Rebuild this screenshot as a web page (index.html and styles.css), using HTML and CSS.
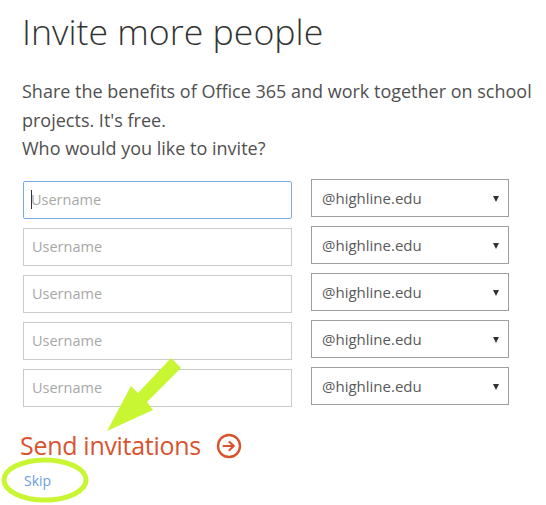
FILE: index.html
```html
<!DOCTYPE html>
<html>
<head>
<meta charset="utf-8">
<link rel="stylesheet" href="styles.css">
</head>
<body>
<main class="page">
  <h1 class="title">Invite more people</h1>
  <p class="intro">Share the benefits of Office 365 and work together on school projects. It's free.<br>Who would you like to invite?</p>
  <div class="rows">
    <div class="row"><div class="user focused"><span class="cursor"></span>Username</div><div class="domain">@highline.edu<span class="caret"></span></div></div>
    <div class="row"><div class="user">Username</div><div class="domain">@highline.edu<span class="caret"></span></div></div>
    <div class="row"><div class="user">Username</div><div class="domain">@highline.edu<span class="caret"></span></div></div>
    <div class="row"><div class="user">Username</div><div class="domain">@highline.edu<span class="caret"></span></div></div>
    <div class="row"><div class="user">Username</div><div class="domain">@highline.edu<span class="caret"></span></div></div>
  </div>
  <div class="send">Send invitations
    <svg class="send-icon" width="26" height="26" viewBox="0 0 26 26"><circle cx="13" cy="13" r="11" fill="none" stroke="#d9532f" stroke-width="2.4"/><path d="M7.5 13H17.5M13.5 9L17.8 13L13.5 17" fill="none" stroke="#d9532f" stroke-width="2.2" stroke-linecap="round" stroke-linejoin="round"/></svg>
  </div>
  <a class="skip">Skip</a>
  <svg class="annot" width="546" height="505" viewBox="0 0 546 505">
    <polygon points="171,358 181,368 147,402 153,410 107,431 131,386 138,393" fill="#c8f632"/>
    <ellipse cx="45" cy="480" rx="41" ry="20" fill="none" stroke="#c8f632" stroke-width="5"/>
  </svg>
</main>
</body>
</html>
```

FILE: styles.css
```css
html, body {
  margin: 0;
  padding: 0;
  background: #ffffff;
}
.page {
  position: relative;
  width: 546px;
  height: 505px;
  overflow: hidden;
  padding-left: 22px;
  box-sizing: border-box;
  font-family: "Open Sans", "Noto Sans", sans-serif;
}
.title {
  margin: 0;
  padding-top: 9px;
  font-size: 35.7px;
  font-weight: 300;
  line-height: 44px;
  color: #333333;
  letter-spacing: 0;
}
.intro {
  margin: 24px 0 0 0;
  font-size: 18px;
  line-height: 28.5px;
  color: #505050;
  font-weight: 400;
  letter-spacing: 0;
}
.rows {
  margin-top: 16px;
  display: flex;
  flex-direction: column;
  gap: 7px;
}
.row {
  display: flex;
  align-items: flex-start;
  gap: 19px;
}
.user {
  margin-top: 2px;
  margin-left: 1px;
  width: 269px;
  height: 38px;
  box-sizing: border-box;
  border: 1px solid #c9cccc;
  padding-left: 8px;
  display: flex;
  align-items: center;
  font-size: 14.5px;
  color: #a8a8a8;
}
.user.focused {
  border-color: #7ba8ea;
  border-width: 1.5px;
  border-radius: 2px;
  padding-left: 7px;
}
.cursor {
  display: inline-block;
  width: 1px;
  height: 19px;
  background: #333;
  margin-right: -1px;
}
.domain {
  position: relative;
  width: 198px;
  height: 38px;
  box-sizing: border-box;
  border: 1px solid #9e9e9e;
  padding-left: 10px;
  display: flex;
  align-items: center;
  font-size: 15px;
  color: #5a5a5a;
}
.caret {
  position: absolute;
  right: 9px;
  top: 16px;
  width: 0;
  height: 0;
  border-left: 3px solid transparent;
  border-right: 3px solid transparent;
  border-top: 6px solid #333;
}
.send {
  margin-top: 21px;
  margin-left: -2px;
  display: flex;
  align-items: center;
  gap: 15px;
  font-size: 25px;
  letter-spacing: -0.3px;
  line-height: 34px;
  color: #d9532f;
  font-weight: 400;
}
.send-icon {
  display: block;
  margin-top: 2px;
}
.skip {
  display: block;
  margin-top: 9px;
  margin-left: 2px;
  font-size: 14px;
  line-height: 20px;
  color: #6a9fdc;
}
.annot {
  position: absolute;
  left: 0;
  top: 0;
  pointer-events: none;
}
```
